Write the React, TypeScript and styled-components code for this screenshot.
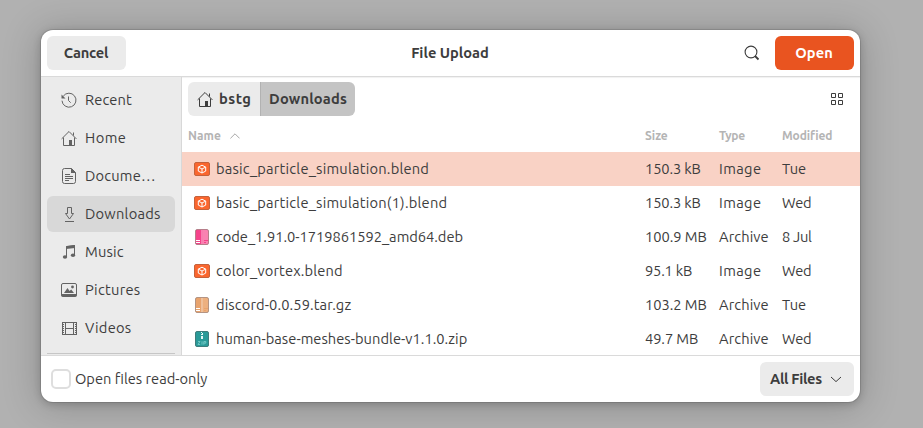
import React from "react";
import styled, { createGlobalStyle } from "styled-components";

const GlobalStyle = createGlobalStyle`
  *, *::before, *::after { box-sizing: border-box; }
  body {
    margin: 0;
    overflow: hidden;
    background: #afafaf;
    color: #3d3d3d;
    font: 14.667px/20px Ubuntu, "Noto Sans", sans-serif;
  }
  button { font: inherit; color: inherit; border: 0; margin: 0; }
  svg { display: block; flex: none; }
`;

const Desktop = styled.div`
  height: 428px;
  padding: 30px 63px 26px 41px;
  background: #b1b1b1;
`;

const Dialog = styled.main`
  display: flex;
  flex-direction: column;
  height: 372px;
  border-radius: 12px;
  background: #fff;
  box-shadow: 0 0 0 1px rgba(0, 0, 0, 0.1), 0 2px 8px rgba(0, 0, 0, 0.2), 0 3px 36px 4px rgba(0, 0, 0, 0.18);
  overflow: hidden;
`;

const HeaderBar = styled.header`
  display: grid;
  grid-template-columns: 1fr auto 1fr;
  align-items: center;
  height: 47px;
  flex: none;
  padding: 0 6px;
  border-bottom: 1px solid #dadada;
`;

const Label = styled.span<{ $track?: number }>`
  white-space: nowrap;
  letter-spacing: ${(p) => p.$track ?? 0}px;
`;

const Title = styled.h1`
  margin: 0 1px 0 0;
  font-size: 14.667px;
  line-height: 20px;
  font-weight: 700;
`;

const Button = styled.button<{ $primary?: boolean }>`
  display: flex;
  align-items: center;
  justify-content: center;
  width: 79px;
  height: 34px;
  padding: 0 1px 0 0;
  border-radius: 6px;
  font-weight: 700;
  background: ${(p) => (p.$primary ? "#e95420" : "#ebebeb")};
  color: ${(p) => (p.$primary ? "#fff" : "#3d3d3d")};
`;

const HeaderActions = styled.div`
  display: flex;
  align-items: center;
  justify-content: flex-end;
  gap: 15px;
`;

const Body = styled.div`
  display: flex;
  flex: 1;
  min-height: 0;
  box-shadow: inset 0 2px 1px -1px rgba(0, 0, 0, 0.06);
`;

const Sidebar = styled.nav`
  display: flex;
  flex-direction: column;
  gap: 2px;
  width: 141px;
  flex: none;
  padding: 5px 6px 0;
  border-right: 1px solid #d8d8d8;
  background: #ebebeb;
  overflow: hidden;
`;

const Place = styled.a<{ $selected?: boolean }>`
  display: flex;
  align-items: center;
  gap: 8px;
  height: 36px;
  flex: none;
  padding-left: 14px;
  border-radius: 6px;
  background: ${(p) => (p.$selected ? "#d8d8d8" : "transparent")};
`;

const PlaceIcon = styled.svg`
  width: 16px;
  height: 16px;
  fill: none;
  stroke: #636363;
`;

const Separator = styled.hr`
  width: 100%;
  height: 1px;
  margin: 5px 0 0;
  border: 0;
  flex: none;
  background: #c6c6c6;
`;

const Browser = styled.section`
  display: flex;
  flex-direction: column;
  flex: 1;
  min-width: 0;
  overflow: hidden;
`;

const PathRow = styled.div`
  display: flex;
  align-items: center;
  justify-content: space-between;
  flex: none;
  height: 39px;
  padding: 5px 15px 0 6px;
`;

const PathBar = styled.div`
  display: flex;
  height: 34px;
  border-radius: 6px;
  overflow: hidden;
`;

const PathSegment = styled.button<{ $current?: boolean }>`
  display: flex;
  align-items: center;
  gap: 6px;
  width: ${(p) => (p.$current ? 95 : 72)}px;
  padding: 0 0 0 ${(p) => (p.$current ? 8 : 9)}px;
  border-left: ${(p) => (p.$current ? "1px solid #b2b2b2" : "0")};
  font-weight: 700;
  background: ${(p) => (p.$current ? "#c4c4c4" : "#ebebeb")};
`;

const tableColumns = "457px 74px 63px 1fr";

const ColumnHeaders = styled.div`
  display: grid;
  grid-template-columns: ${tableColumns};
  align-items: center;
  height: 36px;
  flex: none;
  padding: 3px 0 0 6px;
  font-size: 12px;
  font-weight: 700;
  color: #b4b4b4;
`;

const SortHeader = styled.span`
  display: flex;
  align-items: center;
  gap: 9px;
`;

const FileRow = styled.div<{ $selected?: boolean }>`
  display: grid;
  grid-template-columns: ${tableColumns};
  align-items: center;
  height: 34px;
  flex: none;
  padding-left: 6px;
  background: ${(p) => (p.$selected ? "#f9d2c5" : "transparent")};
`;

const FileName = styled.span`
  display: flex;
  align-items: center;
  gap: 6px;
  padding-left: 6px;
`;

const Footer = styled.footer`
  display: flex;
  align-items: center;
  justify-content: space-between;
  height: 47px;
  flex: none;
  padding: 0 6px 0 10px;
  border-top: 1px solid #dadada;
`;

const ReadOnly = styled.label`
  display: flex;
  align-items: center;
  gap: 4px;
`;

const CheckBox = styled.span`
  width: 20px;
  height: 20px;
  border: 2px solid #dedede;
  border-radius: 5px;
`;

const Filter = styled.button`
  display: flex;
  align-items: center;
  gap: 8px;
  width: 94px;
  height: 34px;
  padding: 0 0 0 10px;
  border-radius: 6px;
  background: #ebebeb;
  font-weight: 700;
`;

const HomeShape = ({ color = "#636363" }: { color?: string }) => (
  <g stroke={color}>
    <path d="M0.6 8.9 8 1.5l7.4 7.4M2.5 7.5v8h11v-8M12.5 5.5v-3" />
    <path d="M8 10h3v5H8z" fill={color} stroke="none" />
  </g>
);

const placeShapes: Record<string, React.ReactNode> = {
  Recent: (
    <>
      <path d="M2.3 4.1A7 7 0 1 1 1 8.7M7.5 4.5v4l2.2 2.2" />
      <path d="M.5 2.5v4h4z" fill="#636363" stroke="none" />
    </>
  ),
  Home: <HomeShape />,
  "Docume…": (
    <>
      <path d="M3.5.5h7l4 4v9a2 2 0 0 1-2 2h-9a2 2 0 0 1-2-2v-11a2 2 0 0 1 2-2zM4 6.5h5M4 8.5h8M4 10.5h8M4 12.5h4" />
      <path d="M10 0v5h5z" fill="#636363" stroke="none" />
    </>
  ),
  Downloads: <path d="M6.5 1.5h4v6h2L8.5 13l-4-5.5h2zM4 15.5h9" />,
  Music: (
    <>
      <path d="M5.5 13V2.5l8-1V11" />
      <path d="M5 2.2 14 1v3L5 5z" fill="#636363" stroke="none" />
      <ellipse cx="4" cy="13" rx="2.2" ry="1.8" fill="#636363" stroke="none" />
      <ellipse cx="12" cy="11.3" rx="2.2" ry="1.8" fill="#636363" stroke="none" />
    </>
  ),
  Pictures: (
    <>
      <rect x=".5" y="1.5" width="15" height="12.5" rx="1.5" />
      <path d="M0 12h16v1a2 2 0 0 1-2 2H2a2 2 0 0 1-2-2zM3 11l3.5-5 2 3 1.7-1.6L13 11z" fill="#636363" stroke="none" />
      <circle cx="11.5" cy="5" r="1.4" fill="#636363" stroke="none" />
    </>
  ),
  Videos: (
    <>
      <path d="M1 2.5h15M1 14.5h15M4.5 2v13M12.5 2v13M4.5 8.5h8" />
      <path d="M2 2v13M15 2v13" strokeWidth="2" strokeDasharray="1 1" />
      <path d="M1.5 2v13M15.5 2v13" />
    </>
  ),
};

type FileKind = "blend" | "deb" | "tar" | "zip";

const packageColors = {
  deb: ["#f5438b", "#f982b1"],
  tar: ["#e8a36d", "#edb07f"],
};

const FileIcon = ({ kind }: { kind: FileKind }) => {
  if (kind === "blend") {
    return (
      <svg width="16" height="16" viewBox="0 0 16 16">
        <rect x=".5" y="1.5" width="15" height="13" rx="1.5" fill="#fa662e" stroke="#c4623c" />
        <path d="m8 4.2 3.7 1.9v4L8 12l-3.7-1.9v-4zM4.3 6.1 8 8l3.7-1.9M8 8v4" fill="none" stroke="#fff" strokeLinejoin="round" strokeWidth="1" />
      </svg>
    );
  }
  if (kind === "zip") {
    return (
      <svg width="16" height="16" viewBox="0 0 16 16">
        <rect x="1.5" y=".5" width="13" height="15" rx="1.5" fill="#2a9a98" stroke="#3f7c7b" />
        <path d="M7 1h1v1H7zM8 2h1v1H8zM7 3h2v1H7zM7 5h2v3H7z" fill="#e8f7f6" />
        <path d="M4 10.5h2L4 13.5h2.2M8 10.3v3.4M9.8 13.7v-3.2h2v1.6h-2" fill="none" stroke="#7fd0cd" strokeWidth=".8" />
      </svg>
    );
  }
  const [base, light] = packageColors[kind];
  return (
    <svg width="16" height="16" viewBox="0 0 16 16">
      <rect x="1.5" y=".5" width="13" height="15" rx="1.5" fill={base} />
      <path d="M9 1h5v14H9z" fill={light} />
      <path d="M7.2 1h1.6v14H7.2z" fill="#fff" opacity=".4" />
      <path d="M2 11.5h4M2 13.5h4" stroke="#fff" />
      <path d="M10 11.5h4M10 13.5h2" stroke={base} />
      <rect x="1.5" y=".5" width="13" height="15" rx="1.5" fill="none" stroke="#80635a" strokeOpacity=".55" />
    </svg>
  );
};

const places: { name: string; track: number; selected?: boolean }[] = [
  { name: "Recent", track: 0.12 },
  { name: "Home", track: 0.45 },
  { name: "Docume…", track: 0.19 },
  { name: "Downloads", track: 0.23, selected: true },
  { name: "Music", track: 0.2 },
  { name: "Pictures", track: 0.28 },
  { name: "Videos", track: 0.25 },
];

type Cell = [text: string, track: number];

const image: Cell = ["Image", 0.38];
const archive: Cell = ["Archive", 0.1];
const tue: Cell = ["Tue", -0.05];
const wed: Cell = ["Wed", -0.2];

const files: { kind: FileKind; cells: [Cell, Cell, Cell, Cell] }[] = [
  { kind: "blend", cells: [["basic_particle_simulation.blend", 0.21], ["150.3 kB", -0.13], image, tue] },
  { kind: "blend", cells: [["basic_particle_simulation(1).blend", 0.21], ["150.3 kB", -0.13], image, wed] },
  { kind: "deb", cells: [["code_1.91.0-1719861592_amd64.deb", -0.02], ["100.9 MB", -0.04], archive, ["8 Jul", -0.3]] },
  { kind: "blend", cells: [["color_vortex.blend", 0.15], ["95.1 kB", -0.19], image, wed] },
  { kind: "tar", cells: [["discord-0.0.59.tar.gz", 0.11], ["103.2 MB", -0.04], archive, tue] },
  { kind: "zip", cells: [["human-base-meshes-bundle-v1.1.0.zip", 0.03], ["49.7 MB", -0.08], archive, wed] },
];

export default function App() {
  return (
    <>
      <GlobalStyle />
      <Desktop>
        <Dialog>
          <HeaderBar>
            <Button><Label $track={-0.2}>Cancel</Label></Button>
            <Title>File Upload</Title>
            <HeaderActions>
              <svg width="16" height="16" viewBox="0 0 16 16" fill="none" stroke="#3d3d3d">
                <circle cx="7" cy="7" r="5.9" strokeWidth="1.1" />
                <path d="m11 11 3.5 3.5" strokeWidth="1.8" />
              </svg>
              <Button $primary><Label $track={0.08}>Open</Label></Button>
            </HeaderActions>
          </HeaderBar>
          <Body>
            <Sidebar>
              {places.map((place) => (
                <Place key={place.name} $selected={place.selected}>
                  <PlaceIcon viewBox="0 0 16 16">{placeShapes[place.name]}</PlaceIcon>
                  <Label $track={place.track}>{place.name}</Label>
                </Place>
              ))}
              <Separator />
            </Sidebar>
            <Browser>
              <PathRow>
                <PathBar>
                  <PathSegment>
                    <svg width="16" height="16" viewBox="0 0 16 16" fill="none"><HomeShape color="#3d3d3d" /></svg>
                    <Label $track={0.5}>bstg</Label>
                  </PathSegment>
                  <PathSegment $current><Label $track={0.2}>Downloads</Label></PathSegment>
                </PathBar>
                <svg width="16" height="16" viewBox="0 0 16 16" fill="none" stroke="#3d3d3d">
                  <path d="M2.5 2.5h4v4h-4zM9.5 2.5h4v4h-4zM2.5 9.5h4v4h-4zM9.5 9.5h4v4h-4z" />
                </svg>
              </PathRow>
              <ColumnHeaders>
                <SortHeader>
                  <Label $track={0.03}>Name</Label>
                  <svg width="10" height="6" viewBox="0 0 10 6" fill="none" stroke="#a8a8a8"><path d="m.4 5.4 4.6-4.6 4.6 4.6" /></svg>
                </SortHeader>
                <Label>Size</Label>
                <Label $track={-0.3}>Type</Label>
                <Label $track={-0.08}>Modified</Label>
              </ColumnHeaders>
              {files.map(({ kind, cells: [name, ...details] }, index) => (
                <FileRow key={name[0]} $selected={index === 0}>
                  <FileName>
                    <FileIcon kind={kind} />
                    <Label $track={name[1]}>{name[0]}</Label>
                  </FileName>
                  {details.map(([text, track], column) => (
                    <Label key={column} $track={track}>{text}</Label>
                  ))}
                </FileRow>
              ))}
            </Browser>
          </Body>
          <Footer>
            <ReadOnly>
              <CheckBox />
              <Label>Open files read-only</Label>
            </ReadOnly>
            <Filter>
              <Label $track={-0.33}>All Files</Label>
              <svg width="12" height="7" viewBox="0 0 12 7" fill="none" stroke="#3d3d3d"><path d="m1 1 5 4.6L11 1" /></svg>
            </Filter>
          </Footer>
        </Dialog>
      </Desktop>
    </>
  );
}
